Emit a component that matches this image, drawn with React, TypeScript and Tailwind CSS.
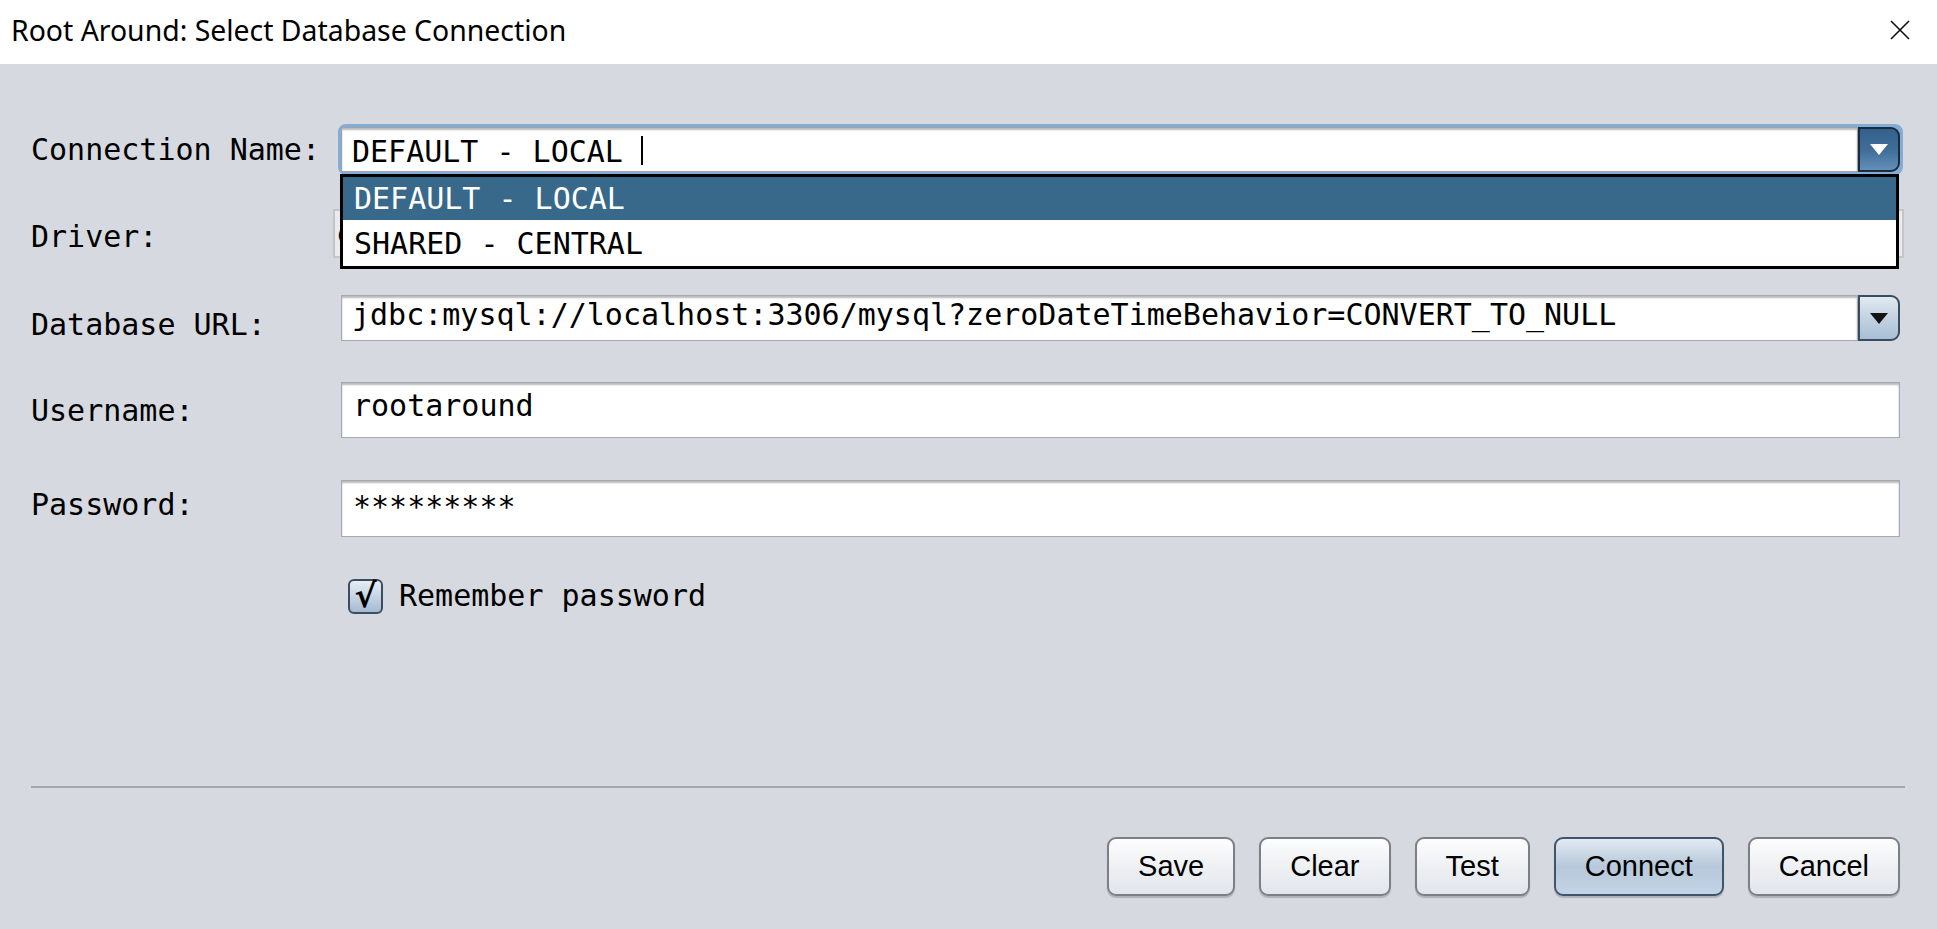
import { ReactNode } from 'react';

const MONO = "font-['DejaVu_Sans_Mono','Liberation_Mono',monospace]";

function ArrowButton({ focused }: { focused?: boolean }) {
    return (
        <div
            className={
                focused
                    ? 'flex w-[42px] shrink-0 items-center justify-center rounded-r-[9px] border-2 border-[#1b2b3c] bg-gradient-to-b from-[#33618b] via-[#3f6d97] to-[#6290b9]'
                    : 'flex w-[42px] shrink-0 items-center justify-center rounded-r-[9px] border-2 border-[#3a4c60] bg-gradient-to-b from-[#e2e9f1] via-[#c3d2e2] to-[#a9bfd5]'
            }
        >
            <svg width="18" height="11" viewBox="0 0 18 11">
                <path d="M0 0H18L9 11Z" fill={focused ? '#ffffff' : '#141414'} />
            </svg>
        </div>
    );
}

function Label({ children, offset }: { children: ReactNode; offset: string }) {
    return <div className={`w-[310px] shrink-0 text-[30px] leading-[36px] text-black ${offset}`}>{children}</div>;
}

function Button({ children, primary }: { children: ReactNode; primary?: boolean }) {
    return (
        <button
            className={
                primary
                    ? "h-[59px] rounded-[9px] border-2 border-[#40546a] bg-gradient-to-b from-[#e3eaf2] via-[#b6c8da] to-[#c2d4e6] px-[29px] font-['Liberation_Sans',Arial,sans-serif] text-[29px] text-black shadow-[0_2px_1px_rgba(0,0,0,0.18)]"
                    : "h-[59px] rounded-[9px] border-2 border-[#7b7f86] bg-gradient-to-b from-[#fdfdfe] via-[#eef0f3] to-[#e2e6ec] px-[29px] font-['Liberation_Sans',Arial,sans-serif] text-[29px] text-black shadow-[0_2px_1px_rgba(0,0,0,0.18)]"
            }
        >
            {children}
        </button>
    );
}

export default function App() {
    return (
        <div className="flex h-[929px] w-[1937px] flex-col overflow-hidden bg-[#d6d9df]">
            {/* Window title bar */}
            <div className="flex h-[64px] shrink-0 items-center justify-between bg-white pl-[11px] pr-[27px]">
                <span className="mt-[-4px] font-['Noto_Sans','Open_Sans',sans-serif] text-[28.4px] text-black">
                    Root Around: Select Database Connection
                </span>
                <svg width="20" height="20" viewBox="0 0 20 20" className="mt-[-4px]">
                    <path d="M1 1L19 19M19 1L1 19" stroke="#111" strokeWidth="1.6" />
                </svg>
            </div>

            <div className={`flex flex-1 flex-col pl-[31px] pr-[37px] pt-[60px] ${MONO}`}>
                {/* Connection Name */}
                <div className="flex h-[51px] items-start">
                    <Label offset="mt-[8px]">Connection Name:</Label>
                    <div className="relative flex-1">
                        <div className="-ml-[3px] -mr-[3px] flex h-[51px] rounded-[8px] border-[3px] border-[#83acd6] bg-[#83acd6]">
                            <div className="flex flex-1 items-start border border-[#9fa3a8] bg-white pl-[10px] pt-[6px] shadow-[inset_0_2px_2px_rgba(0,0,0,0.28)]">
                                <span className="whitespace-pre text-[30px] leading-[36px] text-black">DEFAULT - LOCAL </span>
                                <span className="mt-[2px] h-[29px] w-[2px] bg-black" />
                            </div>
                            <ArrowButton focused />
                        </div>
                        {/* Open dropdown list */}
                        <div className="absolute left-[-1px] top-[50px] z-10 w-[1559px] border-[3px] border-black bg-white">
                            <div className="flex h-[43px] items-center bg-[#39698a] pl-[11px] text-[30px] text-white">DEFAULT - LOCAL</div>
                            <div className="flex h-[46px] items-center pl-[11px] text-[30px] text-black">SHARED - CENTRAL</div>
                        </div>
                    </div>
                </div>

                {/* Driver (mostly hidden behind the open list) */}
                <div className="mt-[34px] flex h-[49px] items-start">
                    <Label offset="mt-[10px]">Driver:</Label>
                    <div className="-ml-[8px] -mr-[4px] flex h-[49px] flex-1 items-center border-2 border-[#c3c5c9] bg-[#e9ebee] pl-[1px]">
                        <span className="text-[30px] leading-[36px] text-black">c</span>
                    </div>
                </div>

                {/* Database URL */}
                <div className="mt-[37px] flex h-[46px] items-start">
                    <Label offset="mt-[12px]">Database URL:</Label>
                    <div className="flex h-[46px] flex-1">
                        <div className="flex flex-1 items-start border border-[#a6a9ae] bg-white pl-[10px] pt-[1px] shadow-[inset_0_2px_2px_rgba(0,0,0,0.28)]">
                            <span className="whitespace-pre text-[30px] leading-[36px] text-black">
                                jdbc:mysql://localhost:3306/mysql?zeroDateTimeBehavior=CONVERT_TO_NULL
                            </span>
                        </div>
                        <ArrowButton />
                    </div>
                </div>

                {/* Username */}
                <div className="mt-[41px] flex h-[56px] items-start">
                    <Label offset="mt-[11px]">Username:</Label>
                    <div className="flex h-[56px] flex-1 items-start border border-[#a6a9ae] bg-white pl-[11px] pt-[5px] shadow-[inset_0_2px_2px_rgba(0,0,0,0.28)]">
                        <span className="text-[30px] leading-[36px] text-black">rootaround</span>
                    </div>
                </div>

                {/* Password */}
                <div className="mt-[42px] flex h-[57px] items-start">
                    <Label offset="mt-[7px]">Password:</Label>
                    <div className="flex h-[57px] flex-1 items-start border border-[#a6a9ae] bg-white pl-[11px] pt-[8px] shadow-[inset_0_2px_2px_rgba(0,0,0,0.28)]">
                        <span className="text-[30px] leading-[36px] text-black">*********</span>
                    </div>
                </div>

                {/* Remember password */}
                <div className="mt-[41px] flex items-center pl-[317px]">
                    <div className="flex h-[35px] w-[35px] items-center justify-center rounded-[6px] border-2 border-[#3b4d61] bg-gradient-to-b from-[#e6edf4] via-[#c6d5e4] to-[#a5bbd2]">
                        <span className="mt-[-2px] font-['DejaVu_Sans',sans-serif] text-[33px] font-bold leading-none text-black">√</span>
                    </div>
                    <span className="ml-[16px] text-[30px] leading-[36px] text-black">Remember password</span>
                </div>

                {/* Separator */}
                <div className="mt-[172px] h-[2px] w-[1874px] bg-[#a3a6ab]" />

                {/* Action buttons */}
                <div className="mt-[49px] flex justify-end gap-[24px]">
                    <Button>Save</Button>
                    <Button>Clear</Button>
                    <Button>Test</Button>
                    <Button primary>Connect</Button>
                    <Button>Cancel</Button>
                </div>
            </div>
        </div>
    );
}
